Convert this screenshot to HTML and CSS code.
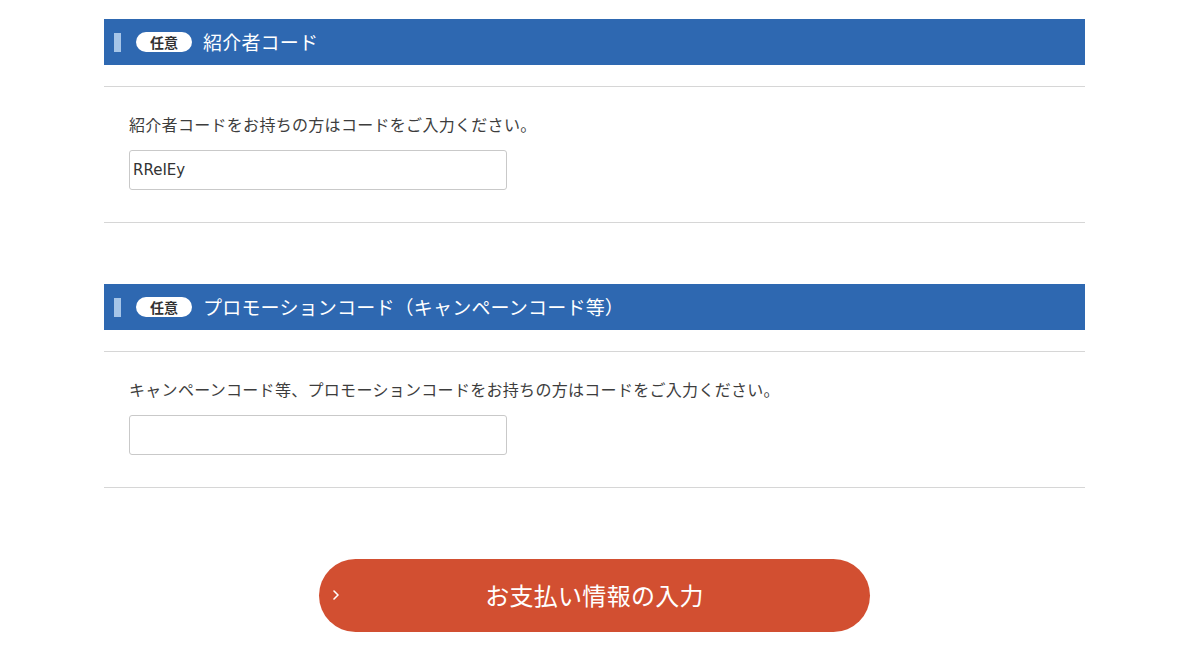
FILE: index.html
```html
<!DOCTYPE html>
<html lang="ja">
<head>
<meta charset="utf-8">
<title>コード入力</title>
<link rel="stylesheet" href="styles.css">
</head>
<body>
<main class="page">
  <section class="block">
    <h2 class="block-head">
      <span class="accent"></span>
      <span class="badge">任意</span>
      <span class="head-title">紹介者コード</span>
    </h2>
    <div class="block-body">
      <p class="note">紹介者コードをお持ちの方はコードをご入力ください。</p>
      <input class="field" type="text" value="RReIEy">
    </div>
  </section>

  <section class="block block-second">
    <h2 class="block-head">
      <span class="accent"></span>
      <span class="badge">任意</span>
      <span class="head-title">プロモーションコード（キャンペーンコード等）</span>
    </h2>
    <div class="block-body">
      <p class="note">キャンペーンコード等、プロモーションコードをお持ちの方はコードをご入力ください。</p>
      <input class="field" type="text" value="">
    </div>
  </section>

  <div class="actions">
    <button class="submit" type="button">
      <svg class="chev" width="6" height="10" viewBox="0 0 6 10"><polyline points="1,1 5,5 1,9" fill="none" stroke="#fff" stroke-width="1.6" stroke-linecap="round" stroke-linejoin="round"/></svg>
      <span class="submit-label">お支払い情報の入力</span>
    </button>
  </div>
</main>
</body>
</html>
```
FILE: styles.css
```css
* { box-sizing: border-box; }
html, body { margin: 0; padding: 0; background: #fff; }
body {
  font-family: "Noto Sans CJK JP", "Noto Sans", sans-serif;
  color: #3a3a3a;
}
.page {
  width: 981px;
  margin-left: 104px;
  padding-top: 19px;
}
.block-head {
  margin: 0;
  height: 46px;
  background: #2e68b1;
  display: flex;
  align-items: center;
  padding-left: 10px;
  font-weight: normal;
}
.accent {
  width: 7px;
  height: 19px;
  background: #a6c5e8;
  margin-right: 15px;
}
.badge {
  width: 56px;
  height: 20px;
  border-radius: 10px;
  background: #fff;
  color: #333;
  font-size: 14px;
  font-weight: bold;
  line-height: 20px;
  text-align: center;
  margin-right: 11px;
}
.head-title {
  color: #fff;
  font-size: 19px;
  line-height: 24px;
  letter-spacing: 0.2px;
}
.block-body {
  margin-top: 21px;
  border-top: 1px solid #d6d6d6;
  border-bottom: 1px solid #d6d6d6;
  padding: 25px 25px 32px;
}
.note {
  margin: 0 0 14px;
  font-size: 16px;
  line-height: 24px;
  letter-spacing: 0.3px;
  color: #3d3d3d;
}
.field {
  display: block;
  width: 378px;
  height: 40px;
  border: 1px solid #c9c9c9;
  border-radius: 3px;
  padding: 0 3px;
  font-family: "DejaVu Sans", Verdana, sans-serif;
  font-size: 15px;
  color: #333;
  background: #fff;
  outline: none;
}
.block-second { margin-top: 61px; }
.actions {
  display: flex;
  justify-content: center;
  margin-top: 71px;
}
.submit {
  position: relative;
  width: 551px;
  height: 73px;
  border: none;
  border-radius: 37px;
  background: #d24f31;
  color: #fff;
  font-family: "Noto Sans CJK JP", sans-serif;
  font-size: 24px;
  line-height: 30px;
  display: flex;
  align-items: center;
  justify-content: center;
  padding: 0 0 2px;
  cursor: pointer;
}
.chev {
  position: absolute;
  left: 14px;
  top: 31px;
}
.submit-label { letter-spacing: 0.3px; }
```
